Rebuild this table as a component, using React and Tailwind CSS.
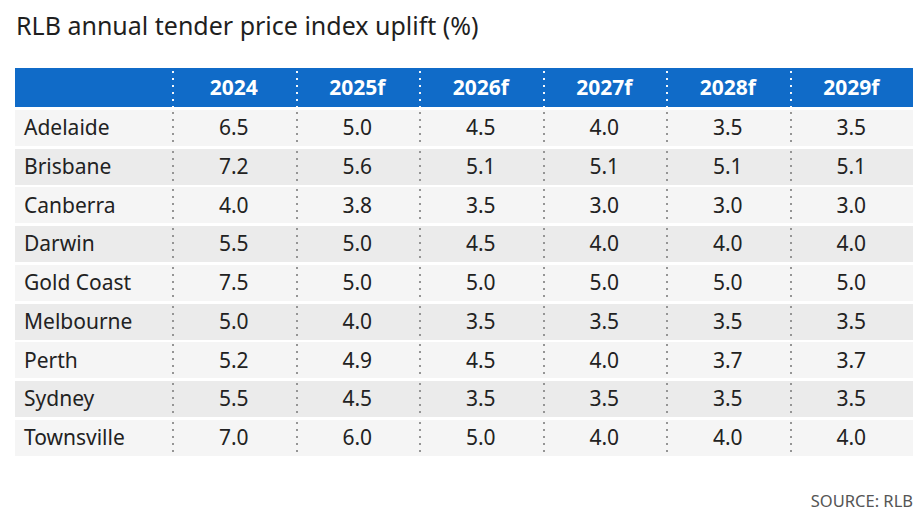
const YEARS = ['2024', '2025f', '2026f', '2027f', '2028f', '2029f']

const ROWS = [
  ['Adelaide', '6.5', '5.0', '4.5', '4.0', '3.5', '3.5'],
  ['Brisbane', '7.2', '5.6', '5.1', '5.1', '5.1', '5.1'],
  ['Canberra', '4.0', '3.8', '3.5', '3.0', '3.0', '3.0'],
  ['Darwin', '5.5', '5.0', '4.5', '4.0', '4.0', '4.0'],
  ['Gold Coast', '7.5', '5.0', '5.0', '5.0', '5.0', '5.0'],
  ['Melbourne', '5.0', '4.0', '3.5', '3.5', '3.5', '3.5'],
  ['Perth', '5.2', '4.9', '4.5', '4.0', '3.7', '3.7'],
  ['Sydney', '5.5', '4.5', '3.5', '3.5', '3.5', '3.5'],
  ['Townsville', '7.0', '6.0', '5.0', '4.0', '4.0', '4.0'],
]

export default function App() {
  return (
    <div className="w-[918px] h-[516px] bg-white text-[#222] font-['Noto_Sans',sans-serif] px-[15px] flex flex-col">
      <h1 className="text-[25px] leading-[30px] mt-[10px] ml-px text-[#1f1f1f]">RLB annual tender price index uplift (%)</h1>

      <div className="mt-[28px] w-[898px] flex flex-col gap-[2.75px]">
        {/* Header */}
        <div className="flex h-[39px] bg-[#106bc8] text-white font-bold text-[21px]">
          <div className="w-[157px]" />
          {YEARS.map(y => (
            <div
              key={y}
              className="flex-1 flex items-center justify-center bg-[linear-gradient(to_bottom,rgba(255,255,255,0.95)_2px,transparent_2px)] bg-[length:2px_7px] bg-repeat-y bg-[position:0_3px]"
            >
              {y}
            </div>
          ))}
        </div>

        {ROWS.map((r, i) => (
          <div key={r[0]} className={`flex h-[36px] text-[21px] ${i % 2 === 0 ? 'bg-[#f5f5f5]' : 'bg-[#ebebeb]'}`}>
            <div className="w-[157px] flex items-center pl-[9px]">{r[0]}</div>
            {r.slice(1).map((v, j) => (
              <div
                key={j}
                className="flex-1 flex items-center justify-center bg-[linear-gradient(to_bottom,#959595_2px,transparent_2px)] bg-[length:2px_7px] bg-repeat-y bg-[position:0_2px]"
              >
                {v}
              </div>
            ))}
          </div>
        ))}
      </div>

      <div className="mt-auto mb-[2px] w-[898px] text-right text-[16.5px] text-[#555]">SOURCE: RLB</div>
    </div>
  )
}
